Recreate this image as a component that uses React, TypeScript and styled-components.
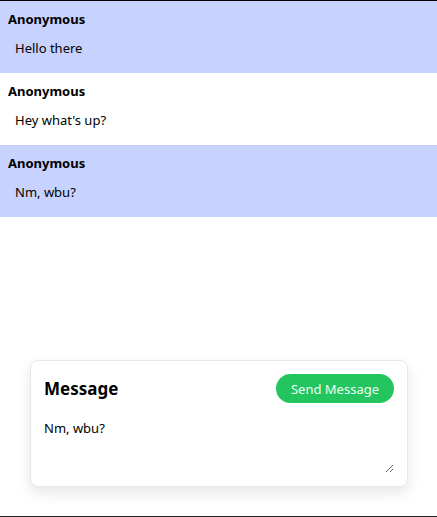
import React, { useState } from "react";
import styled, { createGlobalStyle } from "styled-components";

const GlobalStyle = createGlobalStyle`
    html, body {
        margin: 0;
        padding: 0;
        background: #ffffff;
    }

    body {
        font-family: "Noto Sans", "Open Sans", sans-serif;
        color: #000000;
    }
`;

const Page = styled.div`
    display: flex;
    flex-direction: column;
    box-sizing: border-box;
    height: 517px;
    border-top: 1px solid #000000;
    border-bottom: 1px solid #222222;
`;

const Feed = styled.div`
    display: flex;
    flex-direction: column;
    flex: 1;
`;

const Row = styled.div<{ $tinted: boolean }>`
    display: flex;
    flex-direction: column;
    gap: 11px;
    box-sizing: border-box;
    height: 72px;
    padding: 9px 8px 0;
    background: ${(p) => (p.$tinted ? "#c7d2fe" : "#ffffff")};
`;

const Author = styled.div`
    font-size: 13px;
    font-weight: 700;
    line-height: 18px;
`;

const Body = styled.div`
    padding-left: 7px;
    font-size: 13px;
    line-height: 18px;
`;

const Composer = styled.form`
    display: flex;
    flex-direction: column;
    margin: 0 29px 29px 30px;
    padding: 13px;
    border: 1px solid #e5e7eb;
    border-radius: 8px;
    background: #ffffff;
    box-shadow: 0 6px 14px rgba(0, 0, 0, 0.1);
`;

const Header = styled.div`
    display: flex;
    align-items: center;
    justify-content: space-between;
`;

const Title = styled.h2`
    margin: 0;
    font-size: 17px;
    font-weight: 700;
    line-height: 24px;
`;

const SendButton = styled.button`
    height: 29px;
    padding: 0 15px;
    border: none;
    border-radius: 999px;
    background: #22c55e;
    color: #f0fff4;
    font-family: "Noto Sans", "Open Sans", sans-serif;
    font-size: 13px;
    cursor: pointer;
`;

const Input = styled.textarea`
    height: 54px;
    margin-top: 16px;
    padding: 0;
    border: none;
    outline: none;
    resize: vertical;
    font-family: "Noto Sans", "Open Sans", sans-serif;
    font-size: 13px;
    line-height: 18px;
    color: #000000;
`;

const messages = [
    { author: "Anonymous", text: "Hello there" },
    { author: "Anonymous", text: "Hey what's up?" },
    { author: "Anonymous", text: "Nm, wbu?" },
];

export default function App() {
    const [draft, setDraft] = useState("Nm, wbu?");

    return (
        <Page>
            <GlobalStyle />
            <Feed>
                {messages.map((m, i) => (
                    <Row key={i} $tinted={i % 2 === 0}>
                        <Author>{m.author}</Author>
                        <Body>{m.text}</Body>
                    </Row>
                ))}
            </Feed>
            <Composer onSubmit={(e) => e.preventDefault()}>
                <Header>
                    <Title>Message</Title>
                    <SendButton type="submit">Send Message</SendButton>
                </Header>
                <Input value={draft} onChange={(e) => setDraft(e.target.value)} />
            </Composer>
        </Page>
    );
}
